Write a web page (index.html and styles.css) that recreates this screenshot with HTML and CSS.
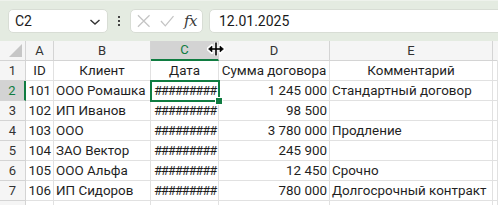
FILE: index.html
```html
<!DOCTYPE html>
<html lang="ru">
<head>
<meta charset="utf-8">
<title>Excel</title>
<link rel="stylesheet" href="styles.css">
</head>
<body>
<div class="toolbar">
  <div class="namebox">
    <span class="nb-text">C2</span>
    <svg class="chev" width="12" height="8" viewBox="0 0 12 8"><path d="M1.5 2 L6 6 L10.5 2" fill="none" stroke="#333" stroke-width="1.4"/></svg>
  </div>
  <div class="dots">
    <svg width="4" height="10" viewBox="0 0 4 10"><rect x="1" y="0" width="2" height="2" fill="#444"/><rect x="1" y="4" width="2" height="2" fill="#444"/><rect x="1" y="8" width="2" height="2" fill="#444"/></svg>
  </div>
  <div class="fxbox">
    <svg width="14" height="14" viewBox="0 0 14 14"><path d="M1 1 L13 13 M13 1 L1 13" stroke="#c4c4c4" stroke-width="1.3" fill="none"/></svg>
    <svg width="15" height="12" viewBox="0 0 15 12"><path d="M1 6 L5.5 11 L14 1" stroke="#c4c4c4" stroke-width="1.3" fill="none"/></svg>
    <span class="fx">fx</span>
  </div>
  <div class="formula">12.01.2025</div>
</div>
<div class="grid">
  <div class="c h corner"><span class="tri"></span></div>
  <div class="c h">A</div>
  <div class="c h">B</div>
  <div class="c h selh">C</div>
  <div class="c h">D</div>
  <div class="c h">E</div>
  <div class="c h last"></div>

  <div class="c rh">1</div>
  <div class="c ctr">ID</div>
  <div class="c ctr">Клиент</div>
  <div class="c ctr">Дата</div>
  <div class="c ctr">Сумма договора</div>
  <div class="c ctr">Комментарий</div>
  <div class="c"></div>

  <div class="c rh selr">2</div>
  <div class="c num">101</div>
  <div class="c">ООО Ромашка</div>
  <div class="c hash active">#########<span class="sel"><span class="handle"></span></span></div>
  <div class="c num">1 245 000</div>
  <div class="c">Стандартный договор</div>
  <div class="c"></div>

  <div class="c rh">3</div>
  <div class="c num">102</div>
  <div class="c">ИП Иванов</div>
  <div class="c hash">#########</div>
  <div class="c num">98 500</div>
  <div class="c"></div>
  <div class="c"></div>

  <div class="c rh">4</div>
  <div class="c num">103</div>
  <div class="c">ООО</div>
  <div class="c hash">#########</div>
  <div class="c num">3 780 000</div>
  <div class="c">Продление</div>
  <div class="c"></div>

  <div class="c rh">5</div>
  <div class="c num">104</div>
  <div class="c">ЗАО Вектор</div>
  <div class="c hash">#########</div>
  <div class="c num">245 900</div>
  <div class="c"></div>
  <div class="c"></div>

  <div class="c rh">6</div>
  <div class="c num">105</div>
  <div class="c">ООО Альфа</div>
  <div class="c hash">#########</div>
  <div class="c num">12 450</div>
  <div class="c">Срочно</div>
  <div class="c"></div>

  <div class="c rh">7</div>
  <div class="c num">106</div>
  <div class="c">ИП Сидоров</div>
  <div class="c hash">#########</div>
  <div class="c num">780 000</div>
  <div class="c">Долгосрочный контракт</div>
  <div class="c"></div>

  <div class="c rh"></div>
  <div class="c"></div>
  <div class="c"></div>
  <div class="c"></div>
  <div class="c"></div>
  <div class="c"></div>
  <div class="c"></div>
</div>
<svg class="cursor" width="18" height="16" viewBox="0 0 18 16">
  <g stroke="#fff" stroke-width="3" fill="#fff" stroke-linejoin="round">
    <path d="M9 1 V15"/>
    <path d="M1.5 8 H16.5"/>
    <path d="M1 8 L5 4.5 V11.5 Z M17 8 L13 4.5 V11.5 Z"/>
  </g>
  <g stroke="#000" stroke-width="1.6" fill="#000">
    <path d="M9 1.5 V14.5" fill="none"/>
    <path d="M3 8 H15" fill="none"/>
    <path d="M1.5 8 L5 5 V11 Z M16.5 8 L13 5 V11 Z" stroke-width="0.6"/>
  </g>
</svg>
</body>
</html>
```
FILE: styles.css
```css
html, body {
  margin: 0;
  padding: 0;
  background: #ffffff;
  overflow: hidden;
}
body {
  width: 498px;
  height: 205px;
  position: relative;
  font-family: Roboto, "Noto Sans", sans-serif;
  color: #1f1f1f;
}
.toolbar {
  height: 41px;
  box-sizing: border-box;
  background: #e4ebe1;
  border-top: 1px solid #eef2ec;
  padding: 8px 0 0 8px;
  display: flex;
  align-items: flex-start;
}
.namebox {
  width: 100px;
  height: 24px;
  box-sizing: border-box;
  background: #fff;
  border: 1px solid #d8ddd5;
  border-radius: 5px;
  display: flex;
  align-items: center;
  justify-content: space-between;
  padding: 0 6px 0 6px;
  font-size: 14px;
  color: #1a1a1a;
}
.chev { margin-top: 1px; }
.dots {
  width: 22px;
  height: 24px;
  display: flex;
  align-items: center;
  justify-content: center;
}
.fxbox {
  width: 73px;
  height: 24px;
  box-sizing: border-box;
  background: #fff;
  border: 1px solid #d8ddd5;
  border-radius: 5px;
  display: flex;
  align-items: center;
  padding: 0 5px 0 6px;
  gap: 9px;
}
.fx {
  font-family: "DejaVu Serif", "Liberation Serif", serif;
  font-style: italic;
  font-size: 15px;
  color: #3a3a3a;
  margin-left: 1px;
  letter-spacing: -0.5px;
}
.formula {
  flex: 1;
  margin-left: 6px;
  margin-right: -10px;
  height: 24px;
  box-sizing: border-box;
  background: #fff;
  border: 1px solid #d8ddd5;
  border-radius: 5px;
  padding-left: 9px;
  font-size: 14px;
  line-height: 22px;
  color: #1a1a1a;
}
.grid {
  display: grid;
  grid-template-columns: 26px 28px 97px 68px 111px 163px 1fr;
  grid-auto-rows: 20px;
}
.c {
  box-sizing: border-box;
  border-right: 1px solid #e1e1e1;
  border-bottom: 1px solid #e1e1e1;
  font-size: 13.4px;
  line-height: 19px;
  padding: 0 2px;
  white-space: nowrap;
  overflow: hidden;
}
.h {
  background: #f5f5f5;
  border-right-color: #d4d4d4;
  border-bottom-color: #d4d4d4;
  text-align: center;
  font-size: 13px;
  color: #333;
}
.h.last { border-right-color: #f5f5f5; }
.corner { position: relative; }
.tri {
  position: absolute;
  right: 3px;
  bottom: 3px;
  width: 0;
  height: 0;
  border-left: 13px solid transparent;
  border-bottom: 13px solid #c6c6c6;
}
.selh {
  background: #d3d3d3;
  border-bottom: 2px solid #107c41;
  color: #107c41;
  line-height: 18px;
}
.rh {
  background: #f5f5f5;
  border-right-color: #d4d4d4;
  border-bottom-color: #d4d4d4;
  text-align: center;
  font-size: 13px;
  color: #333;
}
.selr {
  background: #d3d3d3;
  border-right: 2px solid #107c41;
  color: #107c41;
}
.ctr { text-align: center; }
.num { text-align: right; }
.hash {
  text-align: center;
  font-size: 13px;
  letter-spacing: -1.1px;
  padding: 0 0 0 1px;
}
.active {
  position: relative;
  overflow: visible;
}
.sel {
  position: absolute;
  left: -1px;
  top: -1px;
  right: -2px;
  bottom: -2px;
  border: 2px solid #107c41;
  z-index: 2;
}
.handle {
  position: absolute;
  right: -5px;
  bottom: -5px;
  width: 6px;
  height: 6px;
  background: #107c41;
  border: 1px solid #fff;
}
.cursor {
  position: absolute;
  left: 207px;
  top: 41px;
  z-index: 5;
}
```
